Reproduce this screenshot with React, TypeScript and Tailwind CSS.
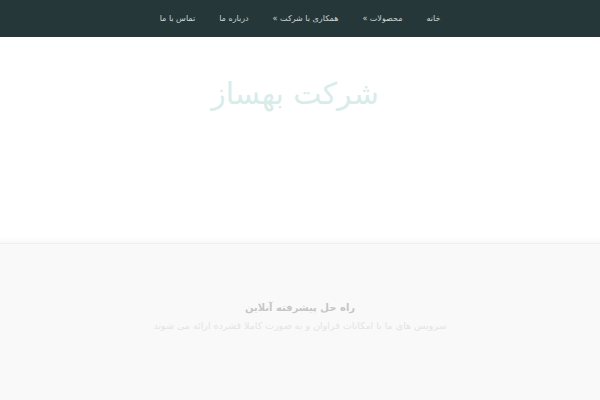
const navItems = ['خانه', 'محصولات »', 'همکاری با شرکت »', 'درباره ما', 'تماس با ما']

export default function App() {
  return (
    <div
      dir="rtl"
      className="w-[600px] h-[400px] overflow-hidden flex flex-col bg-[#f9f9f9]"
      style={{ fontFamily: '"DejaVu Sans", "Noto Sans", sans-serif' }}
    >
      {/* Top navigation */}
      <nav className="h-[37px] shrink-0 bg-[#263739] flex items-center justify-center gap-[24px]">
        {navItems.map((item) => (
          <a key={item} className="text-[8px] text-[#cfd6d6] leading-none">
            {item}
          </a>
        ))}
      </nav>

      {/* Hero */}
      <section className="h-[207px] shrink-0 bg-white flex flex-col border-b border-[#eef0f0]">
        <div className="flex justify-center pt-[42px] pr-[10px]">
          <h1 className="text-[30px] leading-none text-[#d8ecea]">شرکت بهساز</h1>
        </div>
        <div className="flex-1" />
        <div className="h-[6px] bg-gradient-to-b from-white to-[#f6f7f8]" />
      </section>

      {/* Intro */}
      <section className="flex-1 flex flex-col items-center pt-[59px] gap-[8px]">
        <h2 className="text-[10px] font-bold leading-none text-[#c6c6c6]">راه حل پیشرفته آنلاین</h2>
        <p className="text-[9.5px] leading-none text-[#e4e4e4]">
          سرویس های ما با امکانات فراوان و به صورت کاملا فشرده ارائه می شوند
        </p>
      </section>
    </div>
  )
}
